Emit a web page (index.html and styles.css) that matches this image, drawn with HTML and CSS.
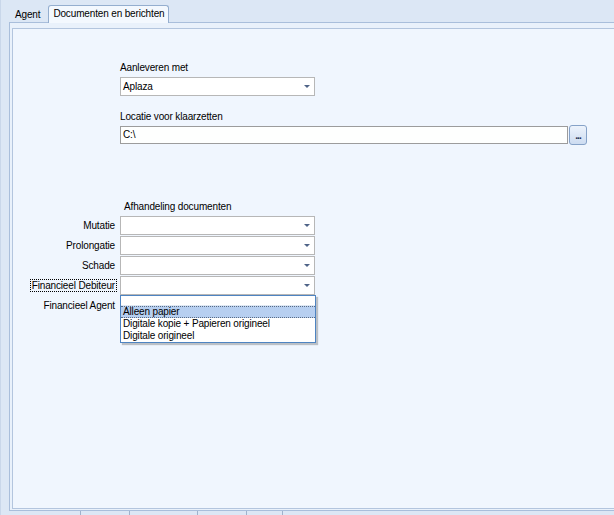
FILE: index.html
```html
<!DOCTYPE html>
<html>
<head>
<meta charset="utf-8">
<link rel="stylesheet" href="styles.css">
</head>
<body>
<div class="window">
  <div class="tabstrip">
    <div class="tab">Agent</div>
    <div class="tab active">Documenten en berichten</div>
  </div>
  <div class="tabpage">
    <div class="panel">
      <div class="section">
        <div class="caption">Aanleveren met</div>
        <div class="combo wide"><span class="value">Aplaza</span><span class="arrow"></span></div>
        <div class="caption second">Locatie voor klaarzetten</div>
        <div class="path-row">
          <div class="textbox">C:\</div>
          <div class="browse">...</div>
        </div>
      </div>
      <div class="docs-title">Afhandeling documenten</div>
      <div class="grid">
        <div class="label">Mutatie</div>
        <div class="combo"><span class="value"></span><span class="arrow"></span></div>
        <div class="label">Prolongatie</div>
        <div class="combo"><span class="value"></span><span class="arrow"></span></div>
        <div class="label">Schade</div>
        <div class="combo"><span class="value"></span><span class="arrow"></span></div>
        <div class="label"><span class="focus">Financieel Debiteur</span></div>
        <div class="combo"><span class="value"></span><span class="arrow"></span></div>
        <div class="label">Financieel Agent</div>
        <div class="combo open">
          <span class="value"></span><span class="arrow"></span>
          <div class="dropdown">
            <div class="dd-edit"></div>
            <div class="dd-item selected">Alleen papier</div>
            <div class="dd-item">Digitale kopie + Papieren origineel</div>
            <div class="dd-item">Digitale origineel</div>
          </div>
        </div>
      </div>
    </div>
  </div>
  <div class="statusbar">
    <div class="cell c1"></div>
    <div class="cell c2"></div>
    <div class="cell c3"></div>
    <div class="cell c4"></div>
    <div class="cell c5"></div>
    <div class="cell rest"></div>
  </div>
</div>
</body>
</html>
```

FILE: styles.css
```css
html, body {
  margin: 0;
  padding: 0;
}

body {
  font: 10px "Liberation Sans", Arial, sans-serif;
  letter-spacing: -0.15px;
  color: #000;
}

.window {
  width: 614px;
  height: 515px;
  background: #dce7f5;
  display: flex;
  flex-direction: column;
  overflow: hidden;
  box-sizing: border-box;
  border-left: 1px solid #c9d7ea;
  padding-left: 1px;
}

.tabstrip {
  height: 22px;
  flex: none;
  display: flex;
  align-items: flex-end;
  padding-left: 5px;
}

.tab {
  height: 14px;
  line-height: 14px;
  padding: 0 8px 0 8px;
  white-space: nowrap;
}

.tab.active {
  height: 17px;
  line-height: 15px;
  padding: 0 4px 0 4px;
  margin-bottom: -1px;
  border: 1px solid #94aecf;
  border-bottom: none;
  border-radius: 3px 3px 0 0;
  background: #f3f8fe;
  position: relative;
  z-index: 1;
}

.tabpage {
  flex: 1;
  margin-left: 7px;
  display: flex;
  flex-direction: column;
  border-top: 1px solid #a9bedb;
  border-left: 1px solid #a9bedb;
  border-bottom: 1px solid #a9bedb;
  background: #e9f1fb;
  padding: 5px 0 1px 2px;
}

.panel {
  flex: 1;
  background: #f0f6fe;
  border-top: 1px solid #b3c5de;
  border-left: 1px solid #b3c5de;
  border-bottom: 1px solid #b3c5de;
  padding-top: 32px;
}

.section {
  margin-left: 107px;
}

.caption {
  line-height: 13px;
  height: 13px;
  margin-bottom: 3px;
}

.caption.second {
  margin-top: 14px;
  margin-bottom: 2px;
}

.combo {
  position: relative;
  height: 19px;
  box-sizing: border-box;
  border: 1px solid #b7b7b7;
  background: #fff;
  display: flex;
  align-items: center;
}

.combo.wide {
  width: 195px;
}

.combo .value {
  flex: 1;
  padding-left: 2px;
  line-height: 13px;
}

.arrow {
  width: 0;
  height: 0;
  border-left: 3px solid transparent;
  border-right: 3px solid transparent;
  border-top: 3px solid #4f6387;
  margin-right: 4px;
}

.path-row {
  display: flex;
  align-items: center;
  gap: 1px;
  height: 20px;
}

.textbox {
  width: 448px;
  height: 18px;
  box-sizing: border-box;
  border: 1px solid #9c9c9c;
  background: #fefffe;
  padding-left: 2px;
  line-height: 16px;
}

.browse {
  width: 18px;
  height: 20px;
  box-sizing: border-box;
  border: 1px solid #86a2c8;
  border-radius: 3px;
  background: linear-gradient(#edf3fc, #cddcf1);
  color: #1d2c55;
  font-weight: bold;
  font-size: 10px;
  line-height: 18px;
  text-align: center;
  letter-spacing: -1px;
  padding-top: 1px;
}

.docs-title {
  margin-left: 111px;
  margin-top: 55px;
  line-height: 13px;
  height: 13px;
  margin-bottom: 3px;
}

.grid {
  display: grid;
  grid-template-columns: 107px 195px;
  grid-auto-rows: 19px;
  row-gap: 1px;
}

.label {
  text-align: right;
  padding-right: 5px;
  line-height: 19px;
  white-space: nowrap;
}

.focus {
  outline: 1px dotted #000;
  outline-offset: 0;
  padding: 0 1px 0 1px;
  margin-right: -1px;
}

.dropdown {
  position: absolute;
  left: -1px;
  top: -2px;
  width: 196px;
  box-sizing: border-box;
  border: 1px solid #4e84c2;
  background: #fff;
  box-shadow: 2px 2px 1px rgba(0, 0, 0, 0.22);
  z-index: 2;
}

.dd-edit {
  height: 10px;
  border-bottom: 1px solid #dfe8f3;
  box-sizing: border-box;
}

.dd-item {
  height: 12px;
  line-height: 12px;
  padding-left: 2px;
  white-space: nowrap;
  box-sizing: border-box;
}

.dd-item.selected {
  background: #b7cff0;
  border-top: 1px dotted #5a6c85;
  border-bottom: 1px dotted #5a6c85;
  line-height: 10px;
}

.statusbar {
  height: 4px;
  flex: none;
  display: flex;
  background: #dce7f5;
}

.cell {
  border-right: 1px solid #9fb2cc;
  height: 4px;
}

.c1 { width: 78px; }
.c2 { width: 48px; }
.c3 { width: 67px; }
.c4 { width: 48px; }
.c5 { width: 35px; }
.rest { flex: 1; border-right: none; }
```
